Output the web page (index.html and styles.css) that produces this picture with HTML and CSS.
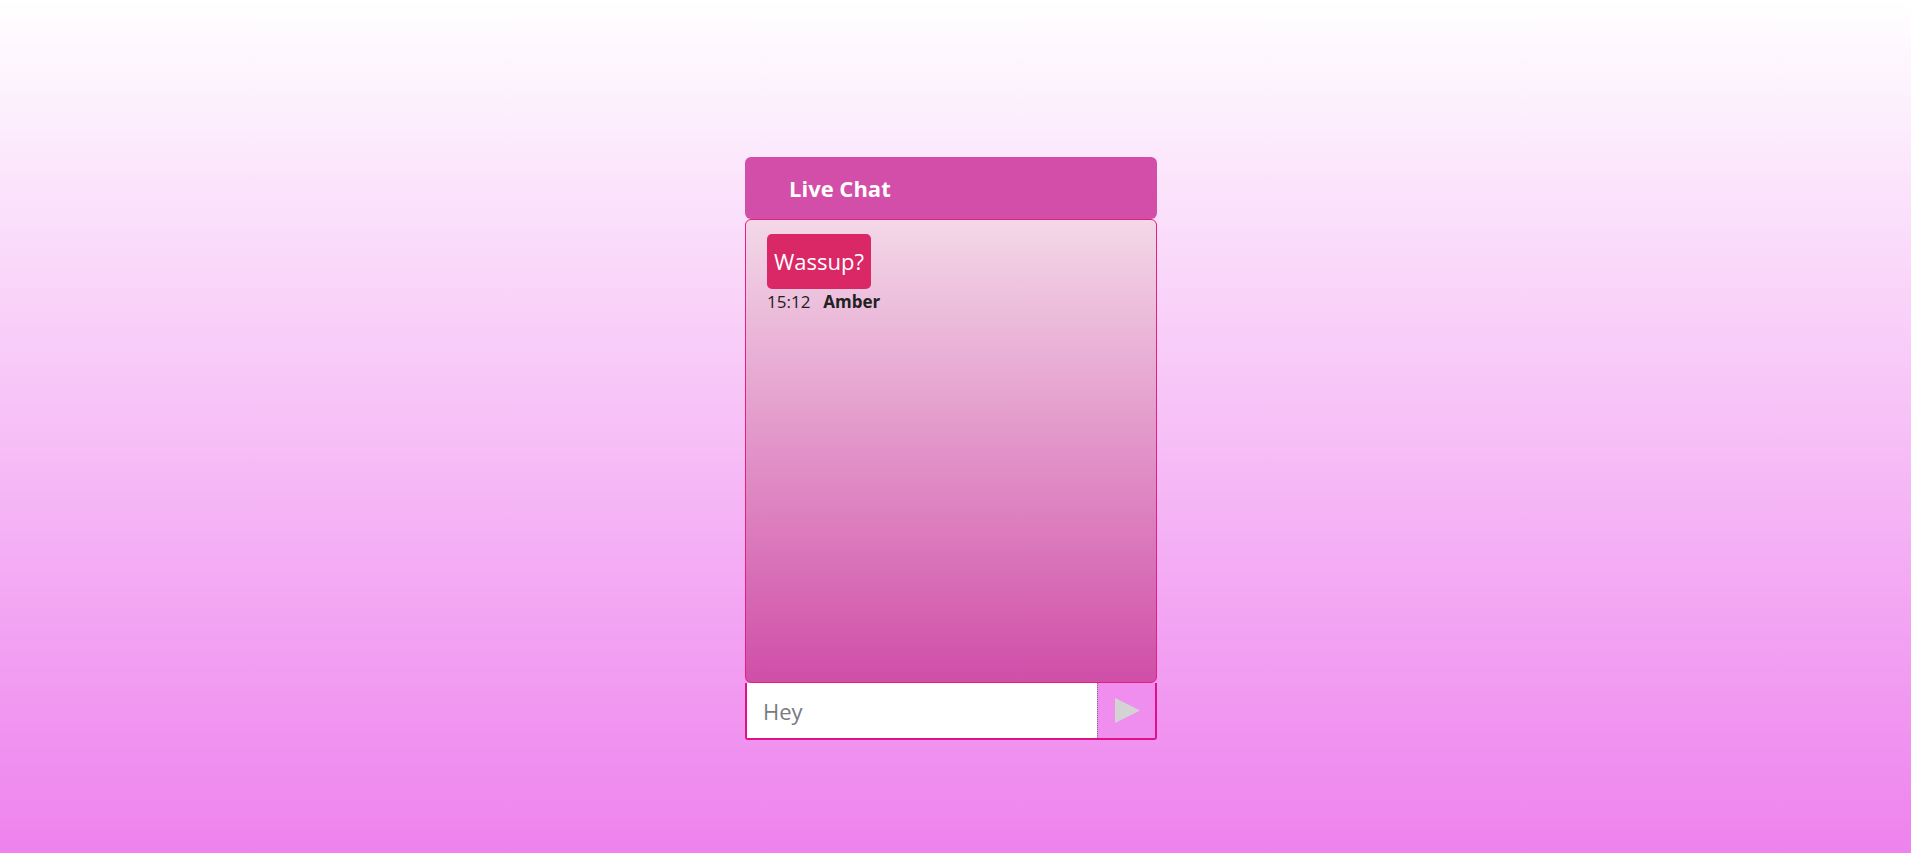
FILE: index.html
```html
<!DOCTYPE html>
<html lang="en">
<head>
<meta charset="utf-8">
<title>Live Chat</title>
<link rel="stylesheet" href="styles.css">
</head>
<body>
<div class="chat">
  <div class="chat-header">Live Chat</div>
  <div class="chat-messages">
    <div class="message">
      <div class="bubble">Wassup?</div>
      <div class="meta"><span class="time">15:12</span><span class="author">Amber</span></div>
    </div>
  </div>
  <form class="chat-form">
    <input class="chat-input" type="text" placeholder="Hey">
    <button class="send" type="button" aria-label="Send">
      <svg width="25" height="25" viewBox="0 0 25 25"><polygon points="0,0 25,12.5 0,25" fill="#d3d3d3"/></svg>
    </button>
  </form>
</div>
</body>
</html>
```
FILE: styles.css
```css
html, body {
  margin: 0;
  padding: 0;
  height: 100%;
}
body {
  background: linear-gradient(#ffffff, #ee82ee);
  font-family: "Open Sans", "Liberation Sans", sans-serif;
  display: flex;
  justify-content: center;
  padding-top: 157px;
  padding-right: 9px;
  box-sizing: border-box;
}
.chat {
  width: 412px;
  display: flex;
  flex-direction: column;
}
.chat-header {
  height: 62px;
  box-sizing: border-box;
  background: #d24ea8;
  border-radius: 6px;
  color: #fff;
  font-weight: 700;
  font-size: 22px;
  line-height: 62px;
  padding-left: 44px;
}
.chat-messages {
  height: 464px;
  box-sizing: border-box;
  border: 1px solid #e5207c;
  border-radius: 6px;
  background: linear-gradient(#f3d8e8, #d04ea8);
  padding: 14px 21px;
}
.message {
  display: flex;
  flex-direction: column;
  align-items: flex-start;
}
.bubble {
  background: #d92865;
  color: #fff;
  border-radius: 5px;
  font-size: 22px;
  line-height: 31px;
  padding: 12px 7px;
}
.meta {
  font-size: 17px;
  line-height: 23px;
  color: #222;
  margin-top: 1px;
}
.author {
  font-weight: 700;
  margin-left: 13px;
}
.chat-form {
  display: flex;
  height: 57px;
  box-sizing: border-box;
  border: 2px solid #e0108a;
  border-top: none;
  border-radius: 0 0 3px 3px;
  margin: 0;
}
.chat-input {
  flex: 1;
  min-width: 0;
  border: none;
  outline: none;
  background: #fff;
  font-family: "Open Sans", "Liberation Sans", sans-serif;
  font-size: 22px;
  padding: 0 16px;
  margin: 0;
}
.chat-input::placeholder {
  color: #7a7a82;
}
.send {
  width: 58px;
  border: none;
  border-left: 1px dotted #777;
  background: #f08ef0;
  display: flex;
  align-items: center;
  justify-content: center;
  padding: 0;
  margin: 0;
  padding-left: 2px;
}
```
